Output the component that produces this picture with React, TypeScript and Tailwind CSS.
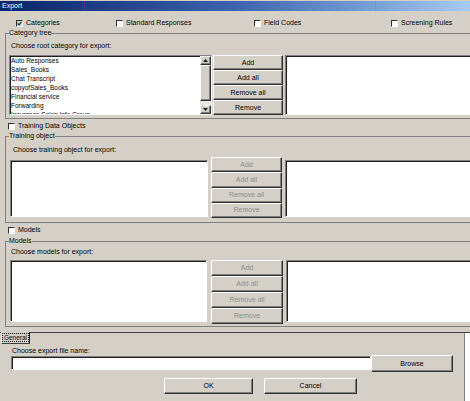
import React from "react";

const SUNKEN =
  "border border-t-[#808080] border-l-[#808080] border-b-white border-r-white shadow-[inset_1px_1px_0_#202020] bg-white";
const RAISED =
  "border border-t-white border-l-white border-b-[#303030] border-r-[#303030] shadow-[inset_-1px_-1px_0_#808080] bg-[#d4d0c8]";

function CheckBox({ label, checked = false }: { label: string; checked?: boolean }) {
  return (
    <label className="flex items-center gap-[3px]">
      <span
        className={`flex h-[7px] w-[7px] items-center justify-center border border-t-[#303030] border-l-[#303030] border-b-white border-r-white ${
          checked ? "bg-[#d4d0c8]" : "bg-white"
        }`}
      >
        {checked && (
          <svg viewBox="0 0 5 5" className="h-[5px] w-[5px]">
            <path d="M0.6 2.4 L2 3.9 L4.5 0.9" fill="none" stroke="#303030" strokeWidth="1.2" />
          </svg>
        )}
      </span>
      <span>{label}</span>
    </label>
  );
}

function Btn({
  children,
  disabled = false,
  className = "",
}: {
  children: React.ReactNode;
  disabled?: boolean;
  className?: string;
}) {
  return (
    <button
      disabled={disabled}
      className={`${RAISED} flex items-center justify-center text-[7px] leading-[8px] ${
        disabled ? "text-[#8c8c8c]" : "text-black"
      } ${className}`}
    >
      {children}
    </button>
  );
}

function Arrow({ up }: { up?: boolean }) {
  return (
    <svg viewBox="0 0 5 3" className="h-[3px] w-[5px]">
      <path d={up ? "M0 3 L2.5 0 L5 3 Z" : "M0 0 L2.5 3 L5 0 Z"} fill="#202020" />
    </svg>
  );
}

function ScrollBar() {
  return (
    <div className="flex h-full w-[11px] shrink-0 flex-col bg-[#e9e7e3]">
      <div className={`${RAISED} flex h-[9px] items-center justify-center`}>
        <Arrow up />
      </div>
      <div className={`${RAISED} h-[36px]`} />
      <div className="flex-1" />
      <div className={`${RAISED} flex h-[9px] items-center justify-center`}>
        <Arrow />
      </div>
    </div>
  );
}

function ButtonStack({ disabled, btnClass }: { disabled?: boolean; btnClass: string }) {
  return (
    <div className="flex h-full flex-col">
      {["Add", "Add all", "Remove all", "Remove"].map((b) => (
        <Btn key={b} disabled={disabled} className={btnClass}>
          {b}
        </Btn>
      ))}
    </div>
  );
}

const categories = [
  "Auto Responses",
  "Sales_Books",
  "Chat Transcript",
  "copyofSales_Books",
  "Financial service",
  "Forwarding",
  "Insurance Sales Info Group",
];

export default function App() {
  return (
    <div className="relative h-[401px] w-[470px] overflow-hidden bg-[#d4d0c8] font-['Liberation_Sans',Arial,sans-serif] text-[7px] leading-[8px] text-black">
      {/* title bar */}
      <div className="relative mt-px flex h-[10px] items-center bg-linear-to-r from-[#0a246a] via-[#3f63ad] to-[#a6caf0] pl-[2px] text-white">
        Export
        <span className="absolute left-[84px] top-0 h-full w-px bg-[#5a2aa8]" />
        <span className="absolute left-[375px] top-0 h-full w-px bg-[#2cb8d8]" />
      </div>

      {/* tab content */}
      <div className="h-[322px] border-b border-[#404040]">
        <div className="grid h-[18px] grid-cols-[100px_138px_137px_80px] pl-[16px] pt-[6px]">
          <CheckBox label="Categories" checked />
          <CheckBox label="Standard Responses" />
          <CheckBox label="Field Codes" />
          <CheckBox label="Screening Rules" />
        </div>

        <fieldset className="ml-[5px] w-[480px] border border-r-0 border-[#808080] pb-[3px]">
          <legend className="ml-[3px] leading-[8px]">Category tree</legend>
          <div className="mt-[5px] pl-[5px]">Choose root category for export:</div>
          <div className="mt-[5px] flex h-[60px] pl-[3px]">
            <div className={`${SUNKEN} flex w-[203px] overflow-hidden`}>
              <div className="flex-1 overflow-hidden pl-[1px] text-[6.5px] leading-[9px]">
                {categories.map((c) => (
                  <div key={c} className="whitespace-nowrap">
                    {c}
                  </div>
                ))}
              </div>
              <ScrollBar />
            </div>
            <div className="ml-px w-[70px]">
              <ButtonStack btnClass="h-[15px]" />
            </div>
            <div className={`${SUNKEN} ml-[2px] w-[200px]`} />
          </div>
        </fieldset>

        <div className="flex h-[13px] items-center pl-[8px] pt-px">
          <CheckBox label="Training Data Objects" />
        </div>

        <fieldset className="ml-[5px] w-[480px] border border-r-0 border-[#808080] pb-[4px]">
          <legend className="ml-[3px] leading-[8px]">Training object</legend>
          <div className="mt-[6px] pl-[7px]">Choose training object for export:</div>
          <div className="mt-[3px] flex h-[61px] pl-[4px]">
            <div className={`${SUNKEN} mt-[3px] h-[57px] w-[198px]`} />
            <div className="ml-[3px] w-[71px]">
              <ButtonStack disabled btnClass="h-[15.25px]" />
            </div>
            <div className={`${SUNKEN} ml-[3px] mt-[3px] h-[57px] w-[200px]`} />
          </div>
        </fieldset>

        <div className="flex h-[14px] items-center pl-[8px]">
          <CheckBox label="Models" />
        </div>

        <fieldset className="ml-[5px] w-[480px] border border-r-0 border-[#808080] pb-[2px]">
          <legend className="ml-[3px] leading-[8px]">Models</legend>
          <div className="mt-[3px] pl-[5px]">Choose models for export:</div>
          <div className="mt-[4px] flex h-[64px] pl-[4px]">
            <div className={`${SUNKEN} h-[62px] w-[197px]`} />
            <div className="ml-[4px] w-[72px]">
              <ButtonStack disabled btnClass="h-[16px]" />
            </div>
            <div className={`${SUNKEN} ml-[3px] h-[62px] w-[200px]`} />
          </div>
        </fieldset>
      </div>

      {/* bottom area */}
      <div className="flex h-[68px]">
        <div className="w-[465px] border-r border-[#808080]">
          <div className="-mt-px ml-px flex h-[12px] w-[29px] items-center justify-center border-b border-l border-r border-b-[#404040] border-l-white border-r-[#202020] bg-[#d4d0c8]">
            <span className="border border-dotted border-black px-px text-[6.5px] leading-[7px]">General</span>
          </div>
          <div className="mt-[3px] pl-[12px]">Choose export file name:</div>
          <div className="flex items-start pl-[11px]">
            <div className={`${SUNKEN} mt-px h-[14px] w-[360px]`} />
            <Btn className="h-[17px] w-[82px]">Browse</Btn>
          </div>
          <div className="mt-[6px] flex pl-[164px]">
            <Btn className="h-[16px] w-[89px]">OK</Btn>
            <Btn className="ml-[11px] h-[16px] w-[93px]">Cancel</Btn>
          </div>
        </div>
        <div className="flex-1 bg-white" />
      </div>
    </div>
  );
}
